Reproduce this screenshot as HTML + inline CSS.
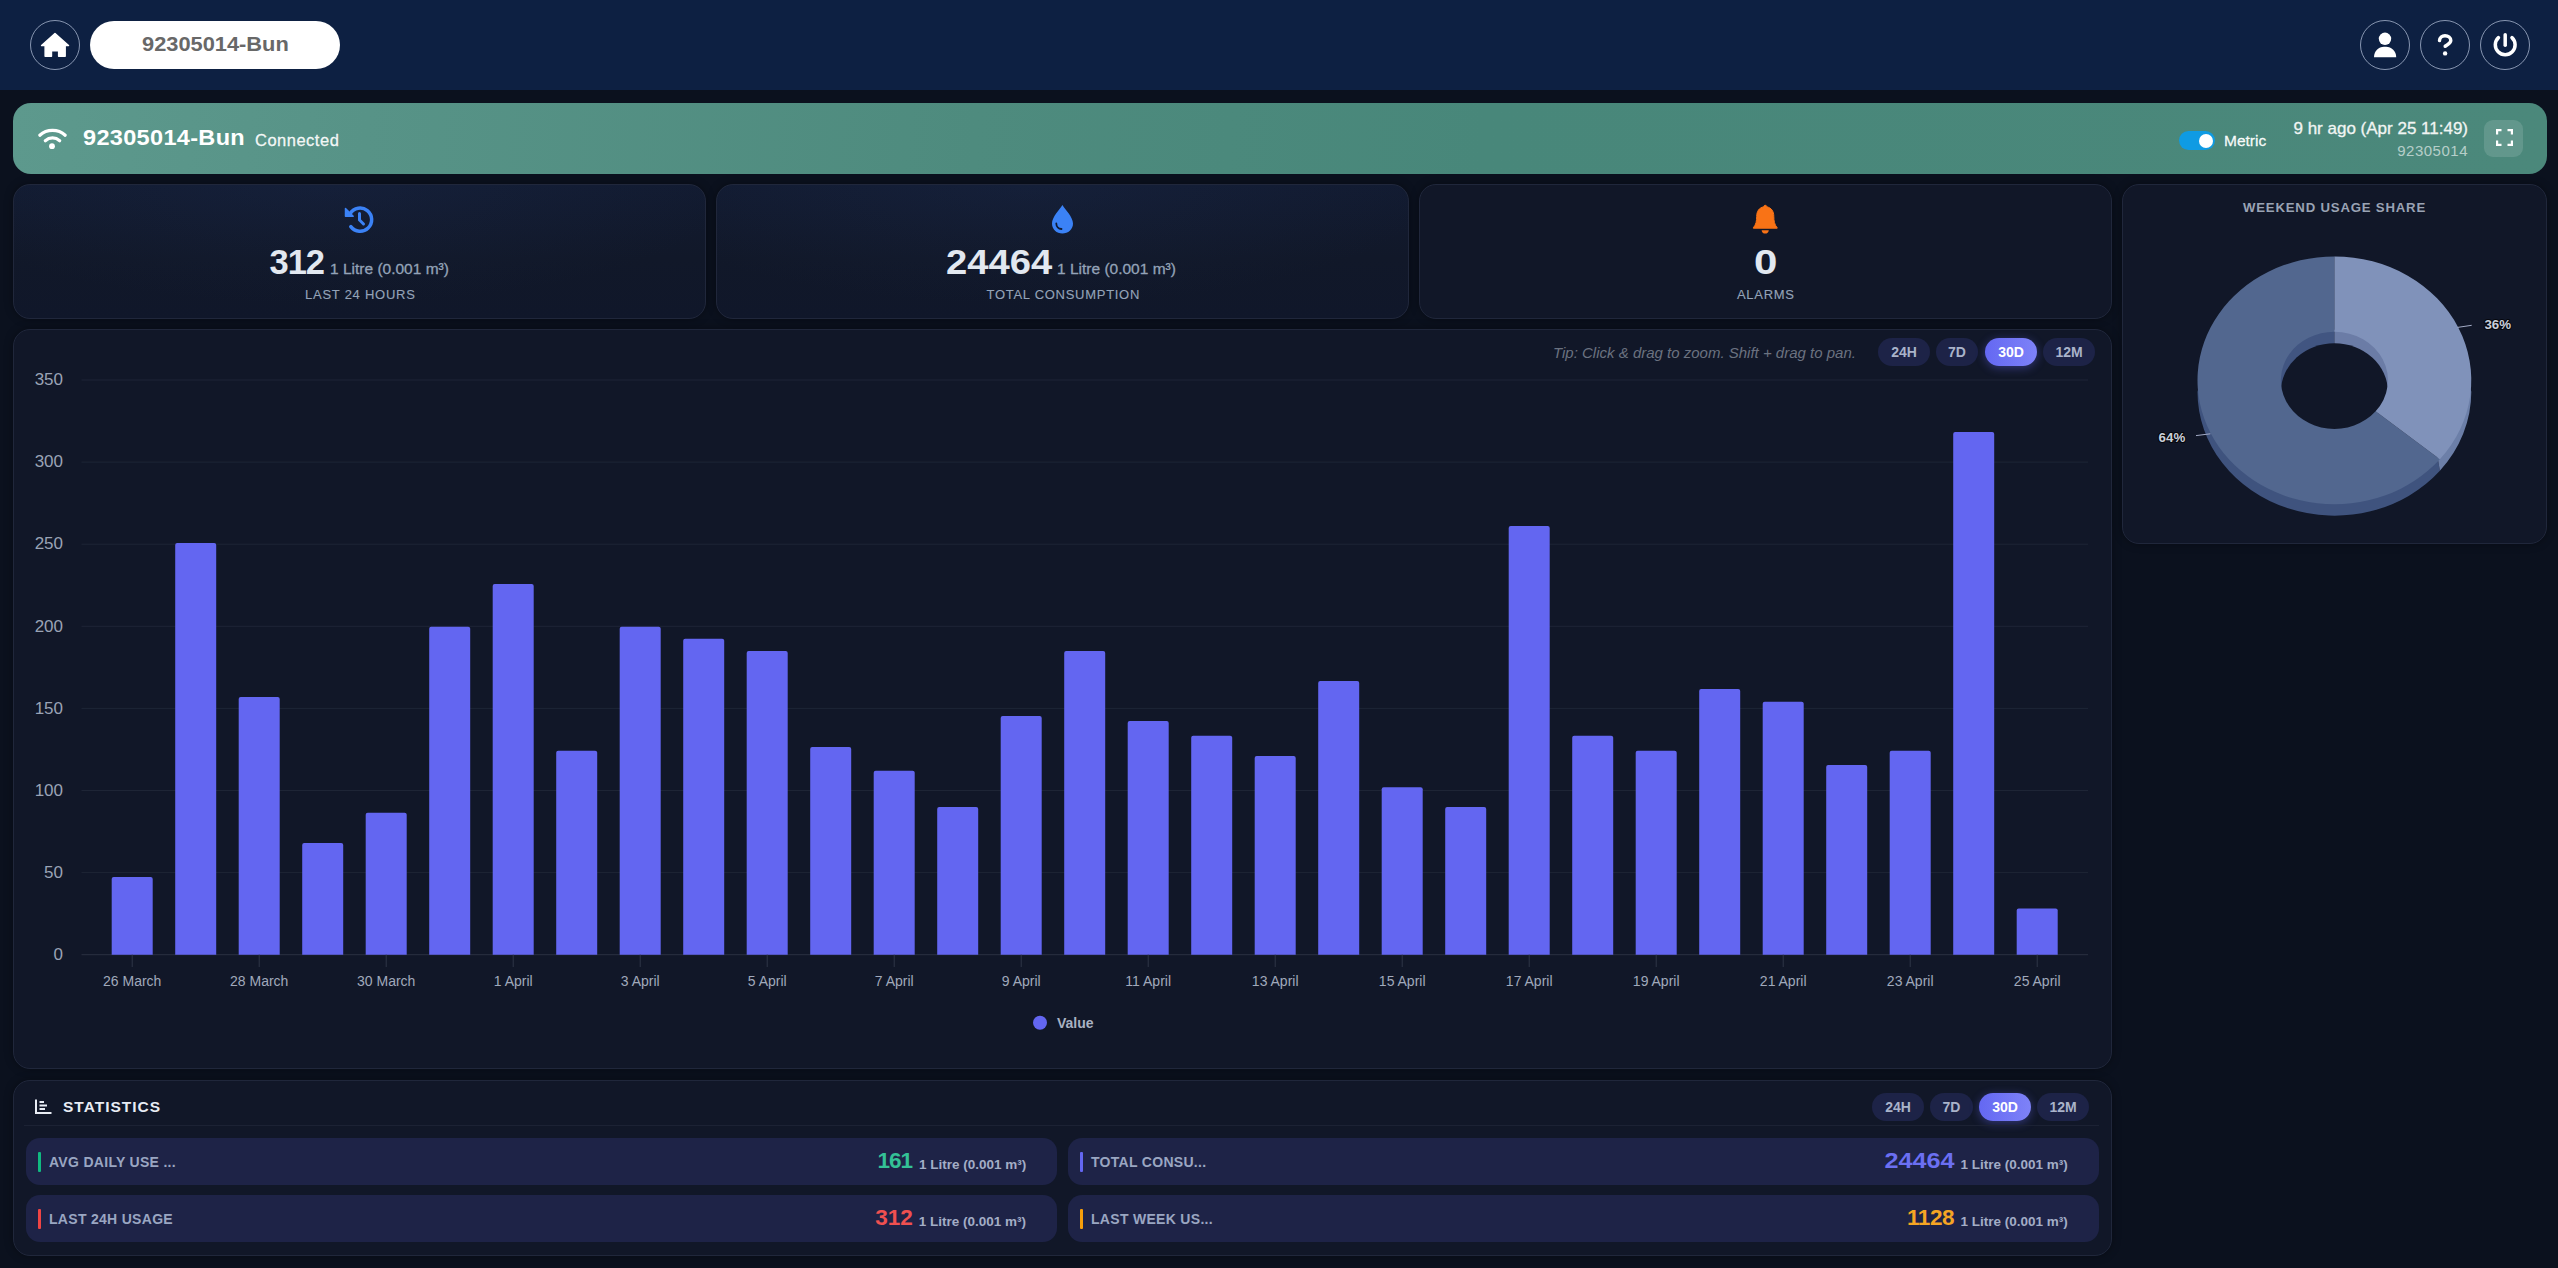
<!DOCTYPE html>
<html><head><meta charset="utf-8"><style>
*{box-sizing:border-box;margin:0;padding:0}
html,body{width:2558px;height:1268px;overflow:hidden}
body{background:#0b111e;font-family:"Liberation Sans",sans-serif;position:relative;color:#e2e8f0}
.abs{position:absolute}
.t{position:absolute;white-space:nowrap;line-height:1}
.med{-webkit-text-stroke:0.3px currentColor}
.hdr{left:0;top:0;width:2558px;height:90px;background:#0d2042}
.circ{position:absolute;width:50px;height:50px;border-radius:50%;border:1px solid rgba(200,212,235,0.65)}
.pill{left:90px;top:21px;width:250px;height:48px;border-radius:24px;background:#fff}
.banner{left:13px;top:103px;width:2534px;height:71px;border-radius:18px;background:linear-gradient(95deg,#5d998d 0%,#579387 14%,#4e8b7e 38%,#48877a 58%,#4b887b 100%)}
.card{position:absolute;border-radius:17px;background:#111728;border:1px solid #20273b;box-shadow:0 0 8px rgba(0,0,0,0.35)}
.kpi{top:184px;width:693px;height:135px;background:radial-gradient(ellipse 60% 90% at 45% 0%,rgba(36,56,100,0.16),rgba(36,56,100,0) 100%),linear-gradient(180deg,#121b31 0%,#111829 55%,#10172a 100%)}
.lab{-webkit-text-stroke:0.12px currentColor}
.btn{position:absolute;height:28px;border-radius:14px;background:#1d2347;color:#a9b3ca;font-weight:bold;font-size:14px;line-height:28px;text-align:center}
.btn.on{background:linear-gradient(90deg,#6468f2,#7e82f8);color:#fff;box-shadow:0 2px 10px rgba(99,102,241,0.4)}
.row{position:absolute;height:47px;border-radius:14px;background:#1e2347}
.bar{position:absolute;width:3px;height:20px;border-radius:1px}
.lbl{color:#9aa6c2;font-weight:bold;font-size:14px;letter-spacing:0.3px}
.unit{color:#a3adc6;font-weight:bold;font-size:13.5px}
</style></head><body>
<div class="abs hdr"></div>
<div class="circ" style="left:30px;top:20px"></div>
<svg class="abs" style="left:25px;top:15px" width="60" height="60" viewBox="0 0 60 60"><path d="M30 18.6 L16.6 30.6 L20.15 30.6 L20.15 41.35 L26.45 41.35 L26.45 35.75 L33.65 35.75 L33.65 41.35 L40.15 41.35 L40.15 30.6 L43.5 30.6 Z" fill="#fff" stroke="#fff" stroke-width="1.5" stroke-linejoin="round"/></svg>
<div class="abs pill"></div>
<div class="t" style="left:142px;top:33.8px;font-size:20.5px;font-weight:bold;color:#686868;letter-spacing:0px;transform:scaleX(1.064);transform-origin:0 0">92305014-Bun</div>
<div class="circ" style="left:2360px;top:20px"></div>
<div class="circ" style="left:2420px;top:20px"></div>
<div class="circ" style="left:2480px;top:20px"></div>
<svg class="abs" style="left:2360px;top:20px" width="50" height="50" viewBox="0 0 50 50"><circle cx="25" cy="18.8" r="6.2" fill="#fff"/><path d="M14 37.2 C14 31 18.5 26.7 24 26.7 L26 26.7 C31.5 26.7 36.2 31 36.2 37.2 Z" fill="#fff"/></svg>
<svg class="abs" style="left:2420px;top:20px" width="50" height="50" viewBox="0 0 50 50"><path d="M19.5 20.6 C19.7 17.6 22 15.7 25 15.7 C28.2 15.7 30.8 17.8 30.8 20.6 C30.8 23.6 27.5 24.5 25.2 26.2 L25.2 26.4" fill="none" stroke="#fff" stroke-width="3.4" stroke-linecap="round" stroke-linejoin="round"/><circle cx="25.1" cy="33.4" r="2.2" fill="#fff"/></svg>
<svg class="abs" style="left:2480px;top:20px" width="50" height="50" viewBox="0 0 50 50"><path d="M18.45 17.6 A9.9 9.9 0 1 0 31.95 17.6" fill="none" stroke="#fff" stroke-width="3.5" stroke-linecap="round"/><line x1="25.2" y1="14.75" x2="25.2" y2="25.25" stroke="#fff" stroke-width="3.5" stroke-linecap="round"/></svg>
<div class="abs banner"></div>
<svg class="abs" style="left:37px;top:127px" width="31" height="24" viewBox="0 0 31 24"><path d="M2.8 8.2 C9.8 1.8 21.2 1.8 28.2 8.2" fill="none" stroke="#fff" stroke-width="3.2" stroke-linecap="round"/><path d="M8.3 13.7 C12.5 10 18.5 10 22.7 13.7" fill="none" stroke="#fff" stroke-width="3.2" stroke-linecap="round"/><circle cx="15" cy="19.2" r="2.9" fill="#fff"/></svg>
<div class="t" style="left:82.5px;top:127.6px;font-size:21.5px;font-weight:bold;color:#fff;letter-spacing:0.3px;transform:scaleX(1.093);transform-origin:0 0">92305014-Bun</div>
<div class="t med" style="left:255px;top:131.6px;font-size:16.5px;color:rgba(255,255,255,0.92);letter-spacing:0.5px">Connected</div>
<div class="abs" style="left:2179px;top:131px;width:36px;height:19px;border-radius:10px;background:#0f9be3"></div>
<div class="abs" style="left:2199px;top:133.5px;width:14px;height:14px;border-radius:50%;background:#fff"></div>
<div class="t med" style="left:2224px;top:133.4px;font-size:15.5px;color:rgba(255,255,255,0.95)">Metric</div>
<div class="t med" style="right:90px;top:119.9px;font-size:17px;color:#f1f5f3">9 hr ago (Apr 25 11:49)</div>
<div class="t" style="right:90px;top:142.6px;font-size:15px;letter-spacing:0.5px;color:rgba(255,255,255,0.6)">92305014</div>
<div class="abs" style="left:2484px;top:120px;width:39px;height:37px;border-radius:9px;background:rgba(255,255,255,0.13)"></div>
<svg class="abs" style="left:2496px;top:128.5px" width="17" height="17" viewBox="0 0 17 17"><path d="M1 5.5 V1 H5.5 M11.5 1 H16 V5.5 M16 11.5 V16 H11.5 M5.5 16 H1 V11.5" fill="none" stroke="#fff" stroke-width="2.4"/></svg>
<div class="card kpi" style="left:13px"></div>
<div class="card kpi" style="left:716px"></div>
<div class="card kpi" style="left:1419px;background:#111728"></div>
<svg class="abs" style="left:344px;top:204px" width="31" height="31" viewBox="0 0 31 31"><path d="M6.2 9.5 A11.6 11.6 0 1 1 6.8 22.6" fill="none" stroke="#3b82f6" stroke-width="3.5" stroke-linecap="round"/><path d="M1.5 4.5 L1.5 12.2 L9.2 12.2 Z" fill="#3b82f6" stroke="#3b82f6" stroke-width="1.5" stroke-linejoin="round"/><path d="M15.5 9.5 V16 L19.5 20" fill="none" stroke="#3b82f6" stroke-width="3" stroke-linecap="round"/></svg>
<svg class="abs" style="left:1050px;top:204px" width="25" height="31" viewBox="0 0 25 31"><path d="M12.4 1 C10 5 2 13 2 19.5 C2 25.5 6.7 29.5 12.4 29.5 C18.1 29.5 23 25.5 23 19.5 C23 13 14.8 5 12.4 1 Z" fill="#3b82f6"/><path d="M6.3 19.5 C6.3 22.5 8.5 24.8 11.5 25" fill="none" stroke="#0f1a33" stroke-width="1.8" stroke-linecap="round"/></svg>
<svg class="abs" style="left:1752px;top:204px" width="27" height="31" viewBox="0 0 27 31"><path d="M13.2 1.3 C14.2 1.3 14.8 2 14.8 2.8 C19.4 3.8 21.8 7.2 21.8 12.5 C21.8 16.5 22.3 20.5 25.2 23.8 L25.2 24.2 L1.3 24.2 L1.3 23.8 C4.2 20.5 4.7 16.5 4.7 12.5 C4.7 7.2 7.1 3.8 11.7 2.8 C11.7 2 12.3 1.3 13.2 1.3 Z" fill="#f97316" stroke="#f97316" stroke-width="1" stroke-linejoin="round"/><path d="M9.6 26.2 L16.8 26.2 C16.5 28.3 15.2 29.6 13.2 29.6 C11.2 29.6 9.9 28.3 9.6 26.2 Z" fill="#f97316"/></svg>
<div class="t" style="left:269.5px;top:245.3px;font-size:34.5px;font-weight:bold;color:#e2e8f0;letter-spacing:-1px">312</div>
<div class="t med" style="left:330px;top:261.3px;font-size:15.5px;color:#94a3b8">1 Litre (0.001 m³)</div>
<div class="t lab" style="left:305px;top:288.3px;font-size:13px;color:#94a3b8;letter-spacing:0.75px">LAST 24 HOURS</div>
<div class="t" style="left:945.8px;top:245.3px;font-size:34.5px;font-weight:bold;color:#e2e8f0;letter-spacing:0px;transform:scaleX(1.106);transform-origin:0 0">24464</div>
<div class="t med" style="left:1057px;top:261.3px;font-size:15.5px;color:#94a3b8">1 Litre (0.001 m³)</div>
<div class="t lab" style="left:986.5px;top:288.3px;font-size:13px;color:#94a3b8;letter-spacing:0.72px">TOTAL CONSUMPTION</div>
<div class="t" style="left:1755.5px;top:245.3px;font-size:34.5px;font-weight:bold;color:#e2e8f0;transform:scaleX(1.22);transform-origin:50% 50%">0</div>
<div class="t lab" style="left:1737px;top:288.3px;font-size:13px;color:#94a3b8;letter-spacing:0.7px">ALARMS</div>
<div class="card" style="left:2122px;top:184px;width:425px;height:360px"></div>
<div class="t" style="left:2243px;top:201.4px;font-size:13.2px;font-weight:bold;color:#9aa3b4;letter-spacing:0.8px">WEEKEND USAGE SHARE</div>
<div class="card" style="left:13px;top:329px;width:2099px;height:740px"></div>
<div class="t" style="left:1553px;top:345px;font-size:15px;font-style:italic;color:#6b7280">Tip: Click &amp; drag to zoom. Shift + drag to pan.</div>
<div class="btn" style="left:1878px;top:338px;width:52px">24H</div>
<div class="btn" style="left:1936px;top:338px;width:42px">7D</div>
<div class="btn on" style="left:1985px;top:338px;width:52px">30D</div>
<div class="btn" style="left:2043px;top:338px;width:52px">12M</div>
<div class="card" style="left:13px;top:1080px;width:2099px;height:176px;background:#111728"></div>
<svg class="abs" style="left:35px;top:1099px" width="17" height="15" viewBox="0 0 17 15"><path d="M1 0.5 V14 H16.5" fill="none" stroke="#e8ecf4" stroke-width="2"/><path d="M4.5 3 H9 M4.5 6.5 H12 M4.5 10 H10" fill="none" stroke="#e8ecf4" stroke-width="2"/></svg>
<div class="t" style="left:63px;top:1099.3px;font-size:15.5px;font-weight:bold;color:#e8ecf4;letter-spacing:1px">STATISTICS</div>
<div class="btn" style="left:1872px;top:1093px;width:52px">24H</div>
<div class="btn" style="left:1930px;top:1093px;width:43px">7D</div>
<div class="btn on" style="left:1979px;top:1093px;width:52px">30D</div>
<div class="btn" style="left:2037px;top:1093px;width:52px">12M</div>
<div class="abs" style="left:24px;top:1125px;width:2075px;height:1px;background:#1c2234"></div>
<div class="row" style="left:26px;top:1138px;width:1031px"></div>
<div class="bar" style="left:38px;top:1152px;background:#10b981"></div>
<div class="t lbl" style="left:49px;top:1155.15px">AVG DAILY USE ...</div>
<div class="t" style="right:1646px;top:1150px;font-size:22.5px;font-weight:bold;color:#34c196;letter-spacing:-1px;">161</div>
<div class="t unit" style="left:919px;top:1157.9px">1 Litre (0.001 m³)</div>
<div class="row" style="left:1068px;top:1138px;width:1031px"></div>
<div class="bar" style="left:1080px;top:1152px;background:#6366f1"></div>
<div class="t lbl" style="left:1091px;top:1155.15px">TOTAL CONSU...</div>
<div class="t" style="right:603.5999999999999px;top:1150px;font-size:22.5px;font-weight:bold;color:#6b6ff2;letter-spacing:0px;transform:scaleX(1.12);transform-origin:100% 0">24464</div>
<div class="t unit" style="left:1960.4px;top:1157.9px">1 Litre (0.001 m³)</div>
<div class="row" style="left:26px;top:1195px;width:1031px"></div>
<div class="bar" style="left:38px;top:1209px;background:#ef4444"></div>
<div class="t lbl" style="left:49px;top:1212.15px">LAST 24H USAGE</div>
<div class="t" style="right:1645.3px;top:1207px;font-size:22.5px;font-weight:bold;color:#ef5050;letter-spacing:0px;">312</div>
<div class="t unit" style="left:918.7px;top:1214.9px">1 Litre (0.001 m³)</div>
<div class="row" style="left:1068px;top:1195px;width:1031px"></div>
<div class="bar" style="left:1080px;top:1209px;background:#f59e0b"></div>
<div class="t lbl" style="left:1091px;top:1212.15px">LAST WEEK US...</div>
<div class="t" style="right:604.0999999999999px;top:1207px;font-size:22.5px;font-weight:bold;color:#f5a524;letter-spacing:-0.5px;">1128</div>
<div class="t unit" style="left:1960.4px;top:1214.9px">1 Litre (0.001 m³)</div>
<svg class="abs" style="left:0;top:0" width="2558" height="1268" viewBox="0 0 2558 1268">
<defs><clipPath id="hole"><ellipse cx="2334.40" cy="380.30" rx="55.50" ry="50.60"/></clipPath></defs>
<path d="M2437.57 457.36 A133.9 120.9 0 0 1 2200.50 380.30 L2197.50 391.80 A136.9 123.9 0 0 0 2439.88 470.78 Z" fill="#3f537e"/>
<path d="M2468.30 380.30 A133.9 120.9 0 0 1 2437.57 457.36 L2439.88 470.78 A136.9 123.9 0 0 0 2471.30 391.80 Z" fill="#6c7fa8"/>
<g clip-path="url(#hole)"><rect x="2277.9" y="328.7" width="56.5" height="103.2" fill="#415581"/>
<rect x="2334.4" y="328.7" width="56.5" height="103.2" fill="#6b7ca6"/>
<ellipse cx="2334.4" cy="391.8" rx="53.5" ry="48.6" fill="#111728"/></g>
<path d="M2439.88 459.28 A136.9 123.9 0 1 1 2334.40 256.40 L2334.40 331.70 A53.5 48.6 0 1 0 2375.62 411.28 Z" fill="#52678f"/>
<path d="M2334.40 256.40 A136.9 123.9 0 0 1 2439.88 459.28 L2375.62 411.28 A53.5 48.6 0 0 0 2334.40 331.70 Z" fill="#8092ba"/>
<path d="M2457.6 327.4 L2471.7 325.3" stroke="#a3abc6" stroke-width="1"/>
<path d="M2196 435.6 L2210.4 433.8" stroke="#a3abc6" stroke-width="1"/>
<text x="2484.4" y="328.9" font-family="Liberation Sans" font-weight="bold" font-size="13.3" fill="#c9ced9" stroke="#05070d" stroke-width="2.2" stroke-linejoin="round" paint-order="stroke">36%</text>
<text x="2158.6" y="441.6" font-family="Liberation Sans" font-weight="bold" font-size="13.3" fill="#c9ced9" stroke="#05070d" stroke-width="2.2" stroke-linejoin="round" paint-order="stroke">64%</text>
<line x1="81.5" y1="954.7" x2="2088" y2="954.7" stroke="#2a3042" stroke-width="1"/>
<text x="63" y="959.9" text-anchor="end" font-family="Liberation Sans" font-size="17" fill="#9aa3b5">0</text>
<line x1="81.5" y1="872.6" x2="2088" y2="872.6" stroke="#1e2536" stroke-width="1"/>
<text x="63" y="877.8" text-anchor="end" font-family="Liberation Sans" font-size="17" fill="#9aa3b5">50</text>
<line x1="81.5" y1="790.5" x2="2088" y2="790.5" stroke="#1e2536" stroke-width="1"/>
<text x="63" y="795.7" text-anchor="end" font-family="Liberation Sans" font-size="17" fill="#9aa3b5">100</text>
<line x1="81.5" y1="708.4" x2="2088" y2="708.4" stroke="#1e2536" stroke-width="1"/>
<text x="63" y="713.6" text-anchor="end" font-family="Liberation Sans" font-size="17" fill="#9aa3b5">150</text>
<line x1="81.5" y1="626.3" x2="2088" y2="626.3" stroke="#1e2536" stroke-width="1"/>
<text x="63" y="631.5" text-anchor="end" font-family="Liberation Sans" font-size="17" fill="#9aa3b5">200</text>
<line x1="81.5" y1="544.2" x2="2088" y2="544.2" stroke="#1e2536" stroke-width="1"/>
<text x="63" y="549.4" text-anchor="end" font-family="Liberation Sans" font-size="17" fill="#9aa3b5">250</text>
<line x1="81.5" y1="462.1" x2="2088" y2="462.1" stroke="#1e2536" stroke-width="1"/>
<text x="63" y="467.3" text-anchor="end" font-family="Liberation Sans" font-size="17" fill="#9aa3b5">300</text>
<line x1="81.5" y1="380.0" x2="2088" y2="380.0" stroke="#1e2536" stroke-width="1"/>
<text x="63" y="385.2" text-anchor="end" font-family="Liberation Sans" font-size="17" fill="#9aa3b5">350</text>
<path d="M111.7 954.7 V879.0 Q111.7 877.0 113.7 877.0 H150.7 Q152.7 877.0 152.7 879.0 V954.7 Z" fill="#6366f1"/>
<path d="M175.2 954.7 V545.1 Q175.2 543.1 177.2 543.1 H214.2 Q216.2 543.1 216.2 545.1 V954.7 Z" fill="#6366f1"/>
<path d="M238.7 954.7 V698.9 Q238.7 696.9 240.7 696.9 H277.7 Q279.7 696.9 279.7 698.9 V954.7 Z" fill="#6366f1"/>
<path d="M302.2 954.7 V845.0 Q302.2 843.0 304.2 843.0 H341.2 Q343.2 843.0 343.2 845.0 V954.7 Z" fill="#6366f1"/>
<path d="M365.7 954.7 V814.8 Q365.7 812.8 367.7 812.8 H404.7 Q406.7 812.8 406.7 814.8 V954.7 Z" fill="#6366f1"/>
<path d="M429.2 954.7 V628.8 Q429.2 626.8 431.2 626.8 H468.2 Q470.2 626.8 470.2 628.8 V954.7 Z" fill="#6366f1"/>
<path d="M492.7 954.7 V585.9 Q492.7 583.9 494.7 583.9 H531.7 Q533.7 583.9 533.7 585.9 V954.7 Z" fill="#6366f1"/>
<path d="M556.2 954.7 V752.8 Q556.2 750.8 558.2 750.8 H595.2 Q597.2 750.8 597.2 752.8 V954.7 Z" fill="#6366f1"/>
<path d="M619.7 954.7 V628.8 Q619.7 626.8 621.7 626.8 H658.7 Q660.7 626.8 660.7 628.8 V954.7 Z" fill="#6366f1"/>
<path d="M683.2 954.7 V640.8 Q683.2 638.8 685.2 638.8 H722.2 Q724.2 638.8 724.2 640.8 V954.7 Z" fill="#6366f1"/>
<path d="M746.7 954.7 V652.9 Q746.7 650.9 748.7 650.9 H785.7 Q787.7 650.9 787.7 652.9 V954.7 Z" fill="#6366f1"/>
<path d="M810.2 954.7 V749.0 Q810.2 747.0 812.2 747.0 H849.2 Q851.2 747.0 851.2 749.0 V954.7 Z" fill="#6366f1"/>
<path d="M873.7 954.7 V772.8 Q873.7 770.8 875.7 770.8 H912.7 Q914.7 770.8 914.7 772.8 V954.7 Z" fill="#6366f1"/>
<path d="M937.2 954.7 V808.9 Q937.2 806.9 939.2 806.9 H976.2 Q978.2 806.9 978.2 808.9 V954.7 Z" fill="#6366f1"/>
<path d="M1000.7 954.7 V718.0 Q1000.7 716.0 1002.7 716.0 H1039.7 Q1041.7 716.0 1041.7 718.0 V954.7 Z" fill="#6366f1"/>
<path d="M1064.2 954.7 V652.9 Q1064.2 650.9 1066.2 650.9 H1103.2 Q1105.2 650.9 1105.2 652.9 V954.7 Z" fill="#6366f1"/>
<path d="M1127.7 954.7 V722.9 Q1127.7 720.9 1129.7 720.9 H1166.7 Q1168.7 720.9 1168.7 722.9 V954.7 Z" fill="#6366f1"/>
<path d="M1191.2 954.7 V737.8 Q1191.2 735.8 1193.2 735.8 H1230.2 Q1232.2 735.8 1232.2 737.8 V954.7 Z" fill="#6366f1"/>
<path d="M1254.7 954.7 V758.0 Q1254.7 756.0 1256.7 756.0 H1293.7 Q1295.7 756.0 1295.7 758.0 V954.7 Z" fill="#6366f1"/>
<path d="M1318.2 954.7 V683.0 Q1318.2 681.0 1320.2 681.0 H1357.2 Q1359.2 681.0 1359.2 683.0 V954.7 Z" fill="#6366f1"/>
<path d="M1381.7 954.7 V789.2 Q1381.7 787.2 1383.7 787.2 H1420.7 Q1422.7 787.2 1422.7 789.2 V954.7 Z" fill="#6366f1"/>
<path d="M1445.2 954.7 V808.9 Q1445.2 806.9 1447.2 806.9 H1484.2 Q1486.2 806.9 1486.2 808.9 V954.7 Z" fill="#6366f1"/>
<path d="M1508.7 954.7 V528.1 Q1508.7 526.1 1510.7 526.1 H1547.7 Q1549.7 526.1 1549.7 528.1 V954.7 Z" fill="#6366f1"/>
<path d="M1572.2 954.7 V737.8 Q1572.2 735.8 1574.2 735.8 H1611.2 Q1613.2 735.8 1613.2 737.8 V954.7 Z" fill="#6366f1"/>
<path d="M1635.7 954.7 V752.8 Q1635.7 750.8 1637.7 750.8 H1674.7 Q1676.7 750.8 1676.7 752.8 V954.7 Z" fill="#6366f1"/>
<path d="M1699.2 954.7 V691.0 Q1699.2 689.0 1701.2 689.0 H1738.2 Q1740.2 689.0 1740.2 691.0 V954.7 Z" fill="#6366f1"/>
<path d="M1762.7 954.7 V703.8 Q1762.7 701.8 1764.7 701.8 H1801.7 Q1803.7 701.8 1803.7 703.8 V954.7 Z" fill="#6366f1"/>
<path d="M1826.2 954.7 V766.9 Q1826.2 764.9 1828.2 764.9 H1865.2 Q1867.2 764.9 1867.2 766.9 V954.7 Z" fill="#6366f1"/>
<path d="M1889.7 954.7 V752.8 Q1889.7 750.8 1891.7 750.8 H1928.7 Q1930.7 750.8 1930.7 752.8 V954.7 Z" fill="#6366f1"/>
<path d="M1953.2 954.7 V434.1 Q1953.2 432.1 1955.2 432.1 H1992.2 Q1994.2 432.1 1994.2 434.1 V954.7 Z" fill="#6366f1"/>
<path d="M2016.7 954.7 V910.4 Q2016.7 908.4 2018.7 908.4 H2055.7 Q2057.7 908.4 2057.7 910.4 V954.7 Z" fill="#6366f1"/>
<line x1="132.2" y1="954.7" x2="132.2" y2="967" stroke="#2f3648" stroke-width="1"/>
<text x="132.2" y="986" text-anchor="middle" font-family="Liberation Sans" font-size="14" fill="#a0a9bb">26 March</text>
<line x1="259.2" y1="954.7" x2="259.2" y2="967" stroke="#2f3648" stroke-width="1"/>
<text x="259.2" y="986" text-anchor="middle" font-family="Liberation Sans" font-size="14" fill="#a0a9bb">28 March</text>
<line x1="386.2" y1="954.7" x2="386.2" y2="967" stroke="#2f3648" stroke-width="1"/>
<text x="386.2" y="986" text-anchor="middle" font-family="Liberation Sans" font-size="14" fill="#a0a9bb">30 March</text>
<line x1="513.2" y1="954.7" x2="513.2" y2="967" stroke="#2f3648" stroke-width="1"/>
<text x="513.2" y="986" text-anchor="middle" font-family="Liberation Sans" font-size="14" fill="#a0a9bb">1 April</text>
<line x1="640.2" y1="954.7" x2="640.2" y2="967" stroke="#2f3648" stroke-width="1"/>
<text x="640.2" y="986" text-anchor="middle" font-family="Liberation Sans" font-size="14" fill="#a0a9bb">3 April</text>
<line x1="767.2" y1="954.7" x2="767.2" y2="967" stroke="#2f3648" stroke-width="1"/>
<text x="767.2" y="986" text-anchor="middle" font-family="Liberation Sans" font-size="14" fill="#a0a9bb">5 April</text>
<line x1="894.2" y1="954.7" x2="894.2" y2="967" stroke="#2f3648" stroke-width="1"/>
<text x="894.2" y="986" text-anchor="middle" font-family="Liberation Sans" font-size="14" fill="#a0a9bb">7 April</text>
<line x1="1021.2" y1="954.7" x2="1021.2" y2="967" stroke="#2f3648" stroke-width="1"/>
<text x="1021.2" y="986" text-anchor="middle" font-family="Liberation Sans" font-size="14" fill="#a0a9bb">9 April</text>
<line x1="1148.2" y1="954.7" x2="1148.2" y2="967" stroke="#2f3648" stroke-width="1"/>
<text x="1148.2" y="986" text-anchor="middle" font-family="Liberation Sans" font-size="14" fill="#a0a9bb">11 April</text>
<line x1="1275.2" y1="954.7" x2="1275.2" y2="967" stroke="#2f3648" stroke-width="1"/>
<text x="1275.2" y="986" text-anchor="middle" font-family="Liberation Sans" font-size="14" fill="#a0a9bb">13 April</text>
<line x1="1402.2" y1="954.7" x2="1402.2" y2="967" stroke="#2f3648" stroke-width="1"/>
<text x="1402.2" y="986" text-anchor="middle" font-family="Liberation Sans" font-size="14" fill="#a0a9bb">15 April</text>
<line x1="1529.2" y1="954.7" x2="1529.2" y2="967" stroke="#2f3648" stroke-width="1"/>
<text x="1529.2" y="986" text-anchor="middle" font-family="Liberation Sans" font-size="14" fill="#a0a9bb">17 April</text>
<line x1="1656.2" y1="954.7" x2="1656.2" y2="967" stroke="#2f3648" stroke-width="1"/>
<text x="1656.2" y="986" text-anchor="middle" font-family="Liberation Sans" font-size="14" fill="#a0a9bb">19 April</text>
<line x1="1783.2" y1="954.7" x2="1783.2" y2="967" stroke="#2f3648" stroke-width="1"/>
<text x="1783.2" y="986" text-anchor="middle" font-family="Liberation Sans" font-size="14" fill="#a0a9bb">21 April</text>
<line x1="1910.2" y1="954.7" x2="1910.2" y2="967" stroke="#2f3648" stroke-width="1"/>
<text x="1910.2" y="986" text-anchor="middle" font-family="Liberation Sans" font-size="14" fill="#a0a9bb">23 April</text>
<line x1="2037.2" y1="954.7" x2="2037.2" y2="967" stroke="#2f3648" stroke-width="1"/>
<text x="2037.2" y="986" text-anchor="middle" font-family="Liberation Sans" font-size="14" fill="#a0a9bb">25 April</text>
<circle cx="1040" cy="1022.7" r="7" fill="#6366f1"/>
<text x="1057" y="1028" font-family="Liberation Sans" font-size="14" font-weight="bold" fill="#a9b2c3">Value</text>
</svg>
</body></html>
